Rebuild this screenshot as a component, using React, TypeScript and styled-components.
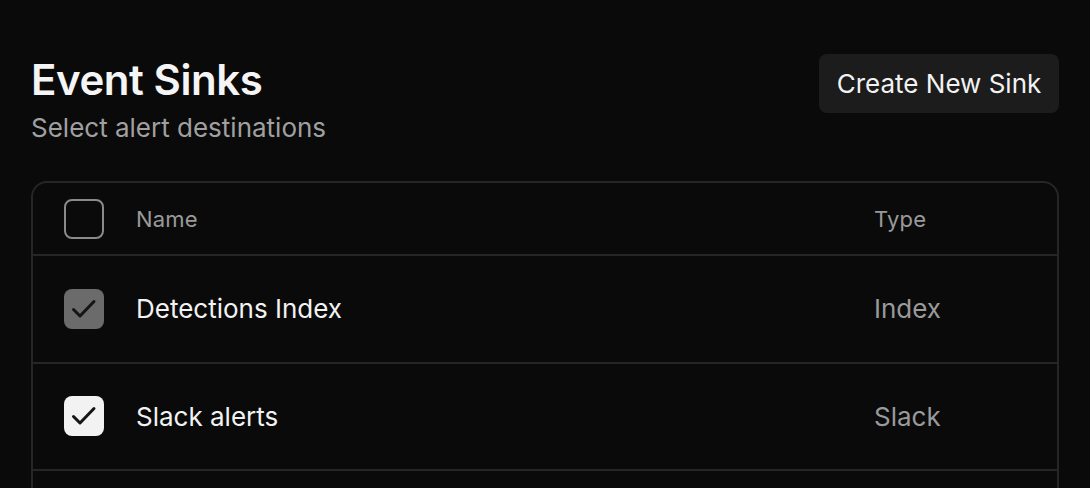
import React from "react";
import styled, { createGlobalStyle } from "styled-components";

const Global = createGlobalStyle`
  html, body { margin: 0; padding: 0; background: #0a0a0a; }
  body { font-family: Inter, "Noto Sans", sans-serif; color: #f2f2f2; }
  * { box-sizing: border-box; }
`;

const Page = styled.div`
  padding: 54px 31px 0 31px;
  display: flex;
  flex-direction: column;
  gap: 37px;
`;

const Header = styled.div`
  display: flex;
  justify-content: space-between;
  align-items: flex-start;
`;

const TitleBlock = styled.div`
  display: flex;
  flex-direction: column;
  gap: 6px;
`;

const Title = styled.h1`
  margin: 0;
  font-size: 42px;
  line-height: 52px;
  font-weight: 600;
  letter-spacing: -0.45px;
  color: #f5f5f5;
`;

const Subtitle = styled.p`
  margin: 0;
  font-size: 26px;
  line-height: 32px;
  color: #a0a0a0;
`;

const Button = styled.button`
  height: 59px;
  width: 240px;
  border: none;
  border-radius: 8px;
  background: #1c1c1c;
  color: #f2f2f2;
  font-family: inherit;
  font-size: 26px;
  font-weight: 400;
  padding: 0;
`;

const Table = styled.div`
  border: 2px solid #262626;
  border-radius: 16px;
  overflow: hidden;
`;

const Row = styled.div<{ $header?: boolean; $last?: boolean }>`
  display: grid;
  grid-template-columns: 72px 1fr 183px;
  align-items: center;
  height: ${(p) => (p.$header ? "73px" : "107.5px")};
  padding-left: 31px;
  border-bottom: ${(p) => (p.$last ? "none" : "2px solid #262626")};
`;

const Box = styled.div<{ $state: "off" | "dim" | "on" }>`
  width: 40px;
  height: 40px;
  border-radius: 8px;
  display: flex;
  align-items: center;
  justify-content: center;
  background: ${(p) =>
    p.$state === "on" ? "#f2f2f2" : p.$state === "dim" ? "#6b6b6b" : "transparent"};
  border: ${(p) => (p.$state === "off" ? "2px solid #8a8a8a" : "none")};
`;

const HeadCell = styled.div`
  font-size: 22px;
  font-weight: 400;
  color: #9a9a9a;
  letter-spacing: 0.2px;
`;

const NameCell = styled.div`
  font-size: 26px;
  font-weight: 400;
  color: #f2f2f2;
`;

const TypeCell = styled.div`
  font-size: 26px;
  color: #9a9a9a;
`;

const Check = () => (
  <svg width="28" height="28" viewBox="0 0 28 28" fill="none">
    <path d="M3.5 14.5 L10 21 L24 6.5" stroke="#151515" strokeWidth="3" strokeLinecap="round" strokeLinejoin="round" />
  </svg>
);

const rows = [
  { name: "Detections Index", type: "Index", state: "dim" as const },
  { name: "Slack alerts", type: "Slack", state: "on" as const },
  { name: "PagerDuty", type: "PagerDuty", state: "off" as const },
];

export default function App() {
  return (
    <>
      <Global />
      <Page>
        <Header>
          <TitleBlock>
            <Title>Event Sinks</Title>
            <Subtitle>Select alert destinations</Subtitle>
          </TitleBlock>
          <Button>Create New Sink</Button>
        </Header>
        <Table>
          <Row $header>
            <Box $state="off" />
            <HeadCell>Name</HeadCell>
            <HeadCell>Type</HeadCell>
          </Row>
          {rows.map((r, i) => (
            <Row key={r.name} $last={i === rows.length - 1}>
              <Box $state={r.state}>{r.state !== "off" && <Check />}</Box>
              <NameCell>{r.name}</NameCell>
              <TypeCell>{r.type}</TypeCell>
            </Row>
          ))}
        </Table>
      </Page>
    </>
  );
}
